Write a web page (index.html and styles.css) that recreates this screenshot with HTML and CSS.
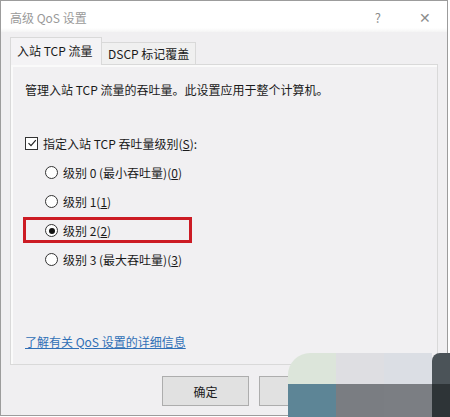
FILE: index.html
```html
<!DOCTYPE html>
<html lang="zh-CN">
<head>
    <meta charset="UTF-8">
    <meta name="viewport" content="width=device-width, initial-scale=1.0">
    <title>高级 QoS 设置</title>
    <link rel="stylesheet" href="styles.css">
</head>
<body>

    <div class="window">
        <!-- Title bar -->
        <div class="titlebar">
            <span class="title">高级 QoS 设置</span>
            <span class="title-btn help">?</span>
            <span class="title-btn close">&#x2715;</span>
        </div>

        <div class="content">
            <div class="tabs">
                <div class="tab active">入站 TCP 流量</div>
                <div class="tab">DSCP 标记覆盖</div>
            </div>

            <div class="panel">
                <p class="desc">管理入站 TCP 流量的吞吐量。此设置应用于整个计算机。</p>

                <label class="check-row">
                    <span class="checkbox">
                        <svg width="10" height="10" viewBox="0 0 10 10"><path d="M1.5 5.2 L4 7.7 L8.8 2.2" fill="none" stroke="#222" stroke-width="1.2"/></svg>
                    </span>
                    指定入站 TCP 吞吐量级别(<u>S</u>):
                </label>

                <div class="radio-list">
                    <div class="radio-row"><span class="radio"></span>级别 0 (最小吞吐量)(<u>0</u>)</div>
                    <div class="radio-row"><span class="radio"></span>级别 1(<u>1</u>)</div>
                    <div class="radio-row highlight"><span class="radio checked"></span>级别 2(<u>2</u>)</div>
                    <div class="radio-row"><span class="radio"></span>级别 3 (最大吞吐量)(<u>3</u>)</div>
                </div>

                <a class="more-link" href="#">了解有关 QoS 设置的详细信息</a>
            </div>

            <div class="buttons">
                <button>确定</button>
                <button>取消</button>
                <button>应用(<u>A</u>)</button>
            </div>
        </div>
    </div>

    <!-- blurred patch over the bottom right corner -->
    <div class="patch">
        <span class="c1"></span><span class="c2"></span><span class="c3"></span><span class="c4"></span>
        <span class="c5"></span><span class="c6"></span><span class="c7"></span><span class="c8"></span>
    </div>

</body>
</html>
```

FILE: styles.css
```css
body {
    margin: 0;
    padding: 0;
    background-color: #ffffff;
    font-family: "Noto Sans CJK SC", "Noto Sans", sans-serif;
    font-size: 12px;
    color: #1a1a1a;
}
.window {
    width: 446px;
    height: 414px;
    border: 1px solid #9c9c9c;
    background-color: #f0eff1;
    display: flex;
    flex-direction: column;
}
.titlebar {
    height: 31px;
    flex-shrink: 0;
    background: linear-gradient(#ffffff 0, #ffffff 27px, #f4f4f4 31px);
    display: flex;
    align-items: center;
    padding-left: 9px;
    color: #9a9a9a;
}
.title {
    flex: 1;
    margin-top: 1px;
}
.title-btn {
    color: #8c8c8c;
    font-size: 13px;
    margin-top: 1px;
}
.help {
    margin-right: 38px;
}
.close {
    margin-right: 16px;
    font-size: 14px;
}
.content {
    flex: 1;
    padding: 6px 0 0 9px;
    display: flex;
    flex-direction: column;
}
.tabs {
    display: flex;
    align-items: flex-end;
    height: 26px;
    flex-shrink: 0;
}
.tab {
    height: 21px;
    line-height: 21px;
    padding: 0 6px;
    border: 1px solid #d9d9d9;
    border-bottom: none;
    border-left: none;
    background-color: #f0f0f0;
    white-space: nowrap;
}
.tab.active {
    height: 27px;
    line-height: 26px;
    margin-bottom: -1px;
    padding: 0 6px 0 6px;
    width: 78px;
    border-left: 1px solid #d9d9d9;
    background-color: #f4f3f5;
    position: relative;
    z-index: 1;
}
.panel {
    width: 412px;
    height: 270px;
    flex-shrink: 0;
    border: 1px solid #d9d9d9;
    box-shadow: inset 2px 2px 0 #fafafa;
    background-color: #f1f0f2;
    padding: 16px 0 13px 14px;
    display: flex;
    flex-direction: column;
}
.desc {
    margin: 0;
    line-height: 18px;
}
.check-row {
    display: flex;
    align-items: center;
    height: 20px;
    margin-top: 34px;
}
.checkbox {
    width: 11px;
    height: 11px;
    border: 1px solid #333;
    background-color: #fff;
    margin-right: 5px;
    display: flex;
    align-items: center;
    justify-content: center;
}
.radio-list {
    display: flex;
    flex-direction: column;
    margin-left: 20px;
    margin-top: 5px;
}
.radio-row {
    height: 29px;
    display: flex;
    align-items: center;
}
.radio {
    width: 11px;
    height: 11px;
    border: 1px solid #333;
    border-radius: 50%;
    background-color: #fff;
    margin-right: 5px;
    display: flex;
    align-items: center;
    justify-content: center;
}
.radio.checked::before {
    content: "";
    width: 6px;
    height: 6px;
    border-radius: 50%;
    background-color: #111;
}
.highlight {
    position: relative;
}
.highlight::after {
    content: "";
    position: absolute;
    left: -22px;
    top: 1px;
    width: 163px;
    height: 20px;
    border: 3px solid #cc1b24;
}
.more-link {
    margin-top: auto;
    line-height: 18px;
    color: #2f6fb6;
    text-decoration: underline;
    align-self: flex-start;
}
.buttons {
    display: flex;
    justify-content: flex-end;
    gap: 10px;
    padding-right: 4px;
    margin-top: 11px;
}
.buttons button {
    width: 87px;
    height: 30px;
    border: 1px solid #adadad;
    background-color: #e1e1e1;
    font-family: inherit;
    font-size: 12px;
    color: #1a1a1a;
    padding: 0;
}
.patch {
    position: absolute;
    left: 288px;
    top: 353px;
    width: 162px;
    height: 64px;
    display: grid;
    grid-template-columns: 48px 48px 48px 18px;
    grid-template-rows: 31px 33px;
    border-top-left-radius: 22px;
    overflow: hidden;
    filter: blur(0.6px);
}
.c1 { background-color: #dce5da; }
.c2 { background-color: #dedee2; }
.c3 { background-color: #dbdee4; }
.c4 { background-color: #4b5358; border-top-left-radius: 8px; }
.c5 { background-color: #5d8596; }
.c6 { background-color: #7a7d82; }
.c7 { background-color: #7b7e83; }
.c8 { background-color: #2e3437; }
```
